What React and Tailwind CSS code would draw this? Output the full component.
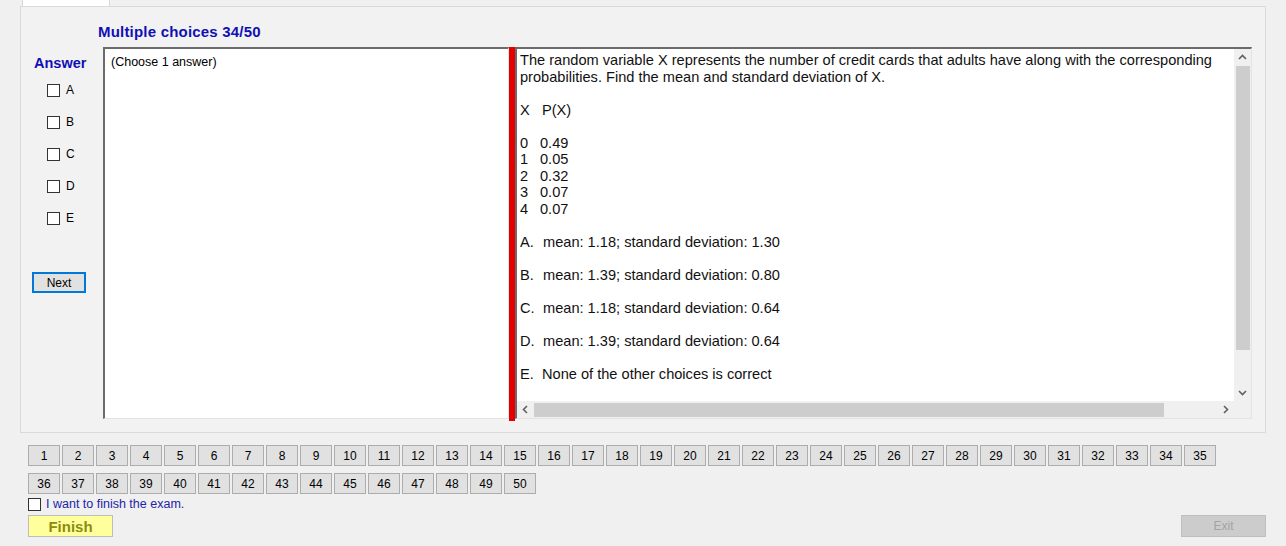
import React from "react";

const nums = Array.from({ length: 50 }, (_, i) => i + 1);

const Chevron = ({ dir = "up" }) => {
  const pts = {
    up: "1,6 4.5,2.5 8,6",
    down: "1,3 4.5,6.5 8,3",
    left: "6,1 2.5,4.5 6,8",
    right: "3,1 6.5,4.5 3,8",
  };
  return (
    <svg width="9" height="9" viewBox="0 0 9 9">
      <polyline points={pts[dir]} fill="none" stroke="#606060" strokeWidth="1.6" />
    </svg>
  );
};

const Box = () => <span className="inline-block w-[13px] h-[13px] border border-[#333] bg-white" />;

const NumButton = ({ n }) => (
  <button className="w-[32px] h-[21px] bg-[#e1e1e1] border border-[#adadad] text-[12px] text-black leading-none">
    {n}
  </button>
);

export default function App() {
  const choices = ["A", "B", "C", "D", "E"];
  return (
    <div className="w-[1286px] h-[546px] bg-[#f0f0f0] overflow-hidden font-['Liberation_Sans',Arial,sans-serif] text-black">
      {/* tab header */}
      <div className="ml-[22px] w-[88px] h-[6px] bg-white border-x border-[#d9d9d9]" />

      {/* tab panel */}
      <div className="ml-[20px] w-[1246px] h-[427px] border border-[#dadada] bg-[#f2f2f2]">
        <div className="h-[40px] pl-[77px] pt-[13px]">
          <span className="text-[15px] leading-[16px] font-bold tracking-[0.2px] text-[#1010b4]">Multiple choices 34/50</span>
        </div>

        <div className="flex">
          {/* answers */}
          <div className="w-[82px] flex flex-col">
            <div className="mt-[8px] pl-[13px] h-[16px] text-[14.5px] leading-[16px] font-bold text-[#1010b4]">Answer</div>
            <div className="mt-[3px]">
              {choices.map((c) => (
                <div key={c} className="h-[32px] flex items-center pl-[26px] gap-[6px] text-[12px]">
                  <Box />
                  <span>{c}</span>
                </div>
              ))}
            </div>
            <button className="mt-[38px] ml-[11px] w-[54px] h-[21px] bg-[#e1e1e1] border-2 border-[#0078d7] text-[12px] leading-none">
              Next
            </button>
          </div>

          {/* left textbox */}
          <div className="w-[406px] h-[372px] bg-white border-t-2 border-l-2 border-[#6b6b6b] border-b border-r border-b-[#e3e3e3] border-r-[#e3e3e3] pl-[6px] pt-[6px] text-[12.5px] leading-[15px]">
            (Choose 1 answer)
          </div>

          {/* red bar */}
          <div className="w-[6px] h-[374px] bg-[#e30000]" />

          {/* right rich text */}
          <div className="w-[737px] h-[372px] bg-white border-t-2 border-l-2 border-[#6b6b6b] border-b border-r border-b-[#e3e3e3] border-r-[#e3e3e3] flex flex-col">
            <div className="flex flex-1 min-h-0">
              <div className="flex-1 overflow-hidden pl-[3px] pt-[3px] text-[14.6px] leading-[16.5px] text-[#111] whitespace-nowrap">
                <div>The random variable X represents the number of credit cards that adults have along with the corresponding</div>
                <div>probabilities. Find the mean and standard deviation of X.</div>
                <div>&nbsp;</div>
                <div><span className="inline-block w-[22px]">X</span>P(X)</div>
                <div>&nbsp;</div>
                <div><span className="inline-block w-[20px]">0</span>0.49</div>
                <div><span className="inline-block w-[20px]">1</span>0.05</div>
                <div><span className="inline-block w-[20px]">2</span>0.32</div>
                <div><span className="inline-block w-[20px]">3</span>0.07</div>
                <div><span className="inline-block w-[20px]">4</span>0.07</div>
                <div>&nbsp;</div>
                <div><span className="inline-block w-[23px]">A.</span>mean: 1.18; standard deviation: 1.30</div>
                <div>&nbsp;</div>
                <div><span className="inline-block w-[23px]">B.</span>mean: 1.39; standard deviation: 0.80</div>
                <div>&nbsp;</div>
                <div><span className="inline-block w-[23px]">C.</span>mean: 1.18; standard deviation: 0.64</div>
                <div>&nbsp;</div>
                <div><span className="inline-block w-[23px]">D.</span>mean: 1.39; standard deviation: 0.64</div>
                <div>&nbsp;</div>
                <div><span className="inline-block w-[22px]">E.</span>None of the other choices is correct</div>
              </div>
              {/* vertical scrollbar */}
              <div className="w-[17px] bg-[#f0f0f0] flex flex-col items-center">
                <div className="h-[17px] flex items-center justify-center"><Chevron dir="up" /></div>
                <div className="w-[14px] h-[284px] bg-[#cdcdcd]" />
                <div className="flex-1" />
                <div className="h-[17px] flex items-center justify-center"><Chevron dir="down" /></div>
              </div>
            </div>
            {/* horizontal scrollbar */}
            <div className="h-[17px] flex bg-[#f0f0f0]">
              <div className="flex-1 flex items-center">
                <div className="w-[17px] flex items-center justify-center"><Chevron dir="left" /></div>
                <div className="w-[630px] h-[14px] bg-[#cdcdcd]" />
                <div className="flex-1" />
                <div className="w-[17px] flex items-center justify-center"><Chevron dir="right" /></div>
              </div>
              <div className="w-[17px] bg-[#f0f0f0]" />
            </div>
          </div>
        </div>
      </div>

      {/* question numbers */}
      <div className="pl-[28px] mt-[12px] flex flex-col gap-[7px]">
        <div className="flex gap-[2px]">
          {nums.slice(0, 35).map((n) => <NumButton key={n} n={n} />)}
        </div>
        <div className="flex gap-[2px]">
          {nums.slice(35).map((n) => <NumButton key={n} n={n} />)}
        </div>
      </div>

      <div className="pl-[28px] mt-[3px] flex items-center gap-[5px] h-[14px]">
        <Box />
        <span className="text-[12.5px] leading-none text-[#2323a8]">I want to finish the exam.</span>
      </div>

      <div className="pl-[28px] pr-[20px] mt-[4px] flex justify-between items-start">
        <button className="w-[85px] h-[22px] bg-[#ffff9c] border border-[#bdbdbd] text-[15px] font-bold leading-none text-[#8c8c10]">
          Finish
        </button>
        <button className="w-[85px] h-[22px] bg-[#cccccc] border border-[#bfbfbf] text-[12px] leading-none text-[#a3a3a3]">
          Exit
        </button>
      </div>
    </div>
  );
}
